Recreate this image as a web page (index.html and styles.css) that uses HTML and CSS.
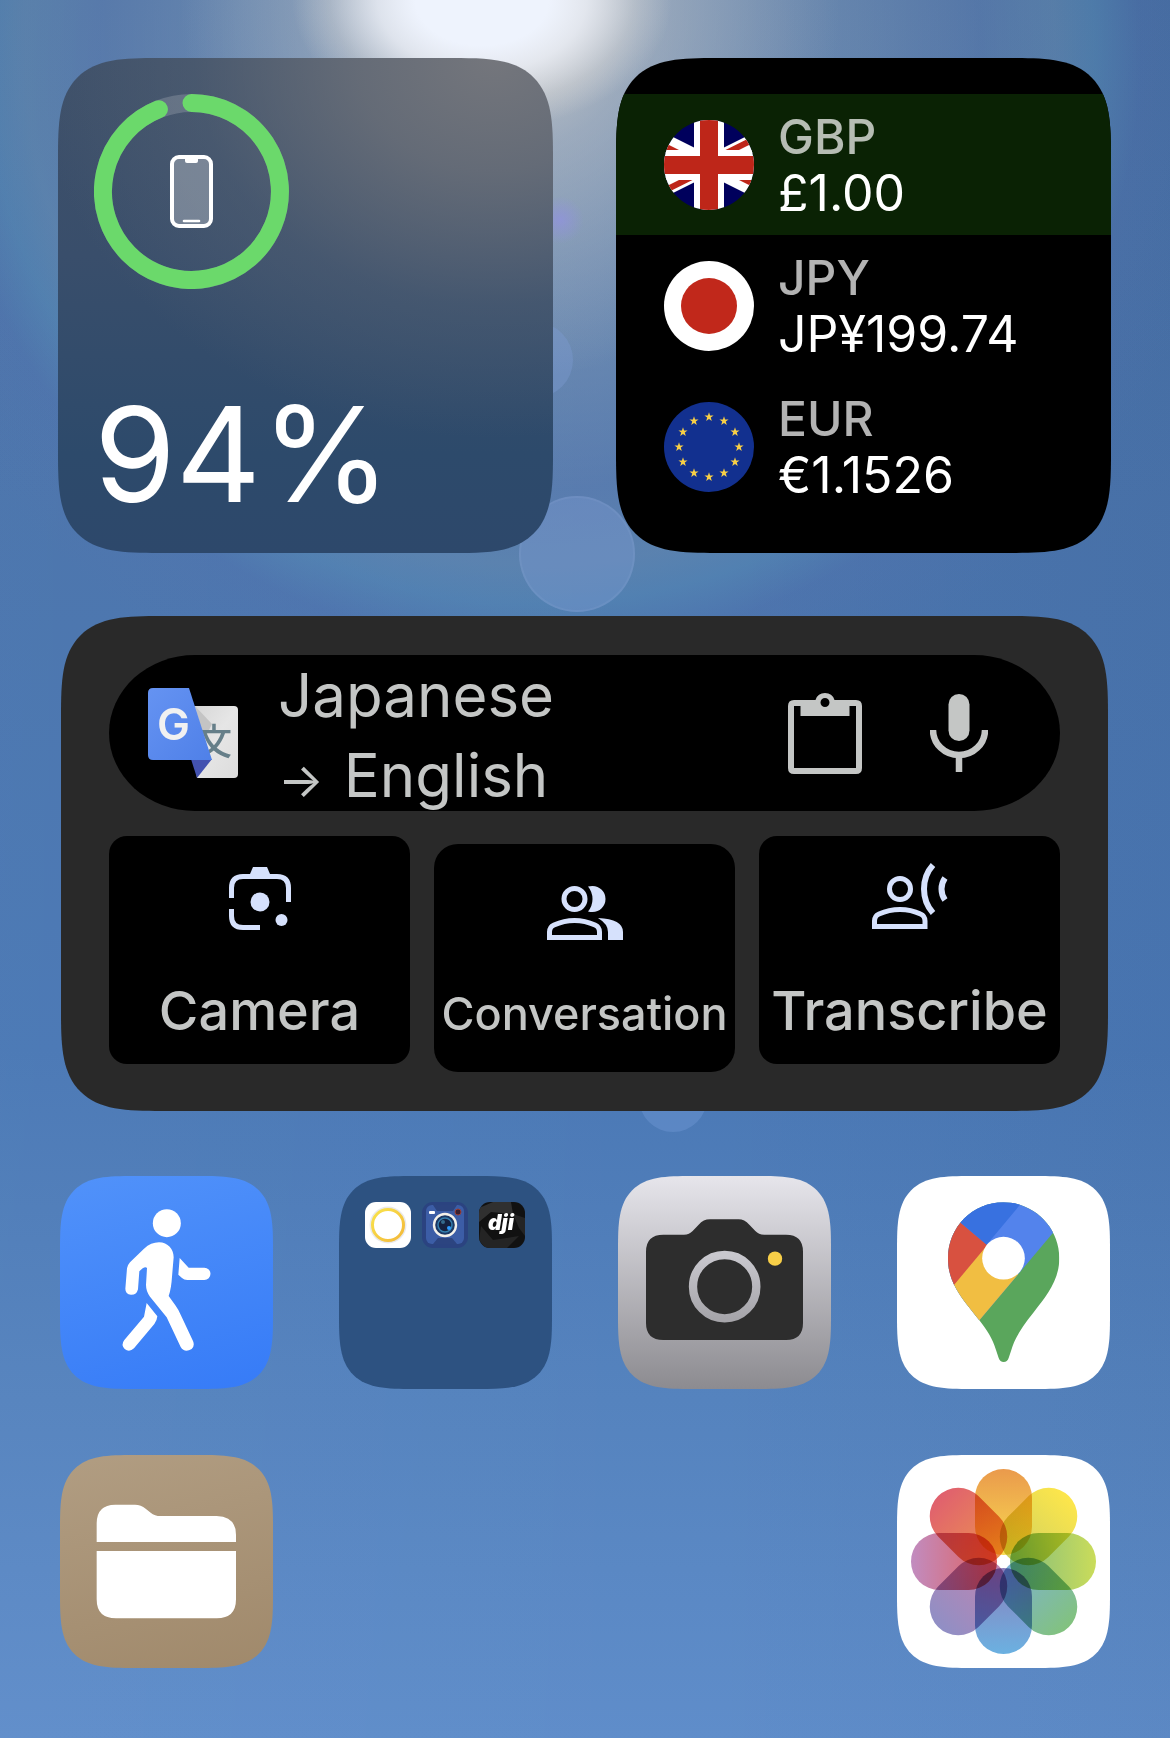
FILE: index.html
```html
<!DOCTYPE html>
<html lang="en">
<head>
<meta charset="utf-8">
<meta name="viewport" content="width=device-width, initial-scale=1">
<title>Home Screen</title>
<link rel="stylesheet" href="styles.css">
</head>
<body>
<div class="wallpaper" aria-hidden="true">
  <span class="flare flare-violet"></span>
  <span class="flare flare-small"></span>
  <span class="flare flare-large"></span>
  <span class="flare flare-low"></span>
</div>
<main class="home">
  <section class="widgets">
    <article class="widget battery" aria-label="Battery">
      <svg class="ring" viewBox="0 0 195 195" aria-hidden="true">
        <circle cx="97.5" cy="97.5" r="88.5" fill="none" stroke="#fff" stroke-opacity=".17" stroke-width="18"/>
        <path d="M97.5 9A88.5 88.5 0 1 1 64.9 15.2" fill="none" stroke="#6bd96b" stroke-width="18" stroke-linecap="round"/>
        <rect x="78" y="63" width="39" height="69" rx="7" fill="#fff" fill-opacity=".28" stroke="#fff" stroke-width="4"/>
        <path d="M91 64h13v3q0 2-2 2h-9q-2 0-2-2z" fill="#fff"/>
        <path d="M90 127h15" stroke="#fff" stroke-width="2.6" stroke-linecap="round"/>
      </svg>
      <p class="level">94%</p>
    </article>

    <article class="widget currency" aria-label="Exchange rates">
      <ul class="rates">
        <li class="rate rate-base">
          <svg class="flag" viewBox="15 0 30 30" aria-hidden="true">
            <defs><clipPath id="saltire"><path d="M30 15h30v15zv15H0zH0V0zV0h30z"/></clipPath></defs>
            <path fill="#00005c" d="M0 0h60v30H0z"/>
            <path stroke="#fff" stroke-width="6" d="M0 0l60 30M60 0L0 30"/>
            <path clip-path="url(#saltire)" stroke="#be2619" stroke-width="4" d="M0 0l60 30M60 0L0 30"/>
            <path stroke="#fff" stroke-width="10" d="M30 0v30M0 15h60"/>
            <path stroke="#be2619" stroke-width="6" d="M30 0v30M0 15h60"/>
          </svg>
          <p class="money"><span class="code">GBP</span><span class="amount">£1.00</span></p>
        </li>
        <li class="rate">
          <svg class="flag" viewBox="0 0 90 90" aria-hidden="true">
            <path fill="#fff" d="M0 0h90v90H0z"/><circle cx="45" cy="45" r="28" fill="#c1281b"/>
          </svg>
          <p class="money"><span class="code">JPY</span><span class="amount">JP¥199.74</span></p>
        </li>
        <li class="rate">
          <svg class="flag" viewBox="-45 -45 90 90" aria-hidden="true">
            <defs><path id="star" fill="#f8cf46" d="M0-4.8L1.1-1.5H4.6L1.8.6L2.8 3.9L0 1.9L-2.8 3.9L-1.8.6L-4.6-1.5H-1.1Z"/></defs>
            <path fill="#12308f" d="M-45-45h90v90h-90z"/>
            <use href="#star" x="0" y="-30"/><use href="#star" x="15" y="-26"/><use href="#star" x="26" y="-15"/>
            <use href="#star" x="30" y="0"/><use href="#star" x="26" y="15"/><use href="#star" x="15" y="26"/>
            <use href="#star" x="0" y="30"/><use href="#star" x="-15" y="26"/><use href="#star" x="-26" y="15"/>
            <use href="#star" x="-30" y="0"/><use href="#star" x="-26" y="-15"/><use href="#star" x="-15" y="-26"/>
          </svg>
          <p class="money"><span class="code">EUR</span><span class="amount">€1.1526</span></p>
        </li>
      </ul>
    </article>
  </section>

  <section class="widget translate" aria-label="Translate">
    <div class="search">
      <svg class="logo" viewBox="0 0 90 90" aria-hidden="true">
        <defs>
          <linearGradient id="lg-blue" x1="0" y1="0" x2="1" y2="1"><stop offset="0" stop-color="#6593f2"/><stop offset="1" stop-color="#4f80e8"/></linearGradient>
          <linearGradient id="lg-grey" x1="0" y1="0" x2="1" y2="1"><stop offset="0" stop-color="#d4d4d4"/><stop offset=".5" stop-color="#e6e6e6"/><stop offset="1" stop-color="#dcdcdc"/></linearGradient>
        </defs>
        <path fill="url(#lg-grey)" d="M40 18H86q4 0 4 4V86q0 4-4 4H49z"/>
        <path fill="#c4c4c4" d="M47 18L64 36L56 52z"/>
        <text class="logo-han" x="48" y="67">文</text>
        <path fill="#4352b0" d="M43 71H64L49 90z"/>
        <path fill="url(#lg-blue)" d="M5 0H41L64 72H5q-5 0-5-5V5q0-5 5-5z"/>
        <text class="logo-g" x="9" y="52">G</text>
      </svg>
      <p class="languages"><span>Japanese</span><span class="target"><span class="arrow">→</span>English</span></p>
      <button class="icon-button" type="button" aria-label="Paste">
        <svg width="74" height="82" viewBox="0 0 74 82" aria-hidden="true">
          <path fill="#c4c6c5" fill-rule="evenodd" d="M6 8H27.500A10 10 0 0 1 46.500 8H68q6 0 6 6V76q0 6-6 6H6q-6 0-6-6V14Q0 8 6 8zM6 14V76H68V14H61.500V24H12.500V14zM37 6a4.500 4.500 0 1 0 0 9a4.500 4.500 0 1 0 0-9z"/>
        </svg>
      </button>
      <button class="icon-button" type="button" aria-label="Speak">
        <svg width="58" height="78" viewBox="0 0 58 78" aria-hidden="true">
          <rect x="18.500" y="0" width="21" height="47" rx="10.500" fill="#c4c6c5"/>
          <path d="M3 36A26 25 0 0 0 55 36M29 61V78" fill="none" stroke="#c4c6c5" stroke-width="6.500"/>
        </svg>
      </button>
    </div>
    <div class="actions">
      <button class="action" type="button">
        <svg class="action-icon" viewBox="0 0 76 64" aria-hidden="true">
          <g fill="none" stroke="#d6e1fc" stroke-width="5"><path d="M9.500 32V22Q9.500 10.500 21 10.500H55Q66.500 10.500 66.500 22V36"/><path d="M9.500 43V50Q9.500 61.500 21 61.500H38"/></g>
          <path fill="#d6e1fc" d="M28 8L31 1H45L48 8z"/><circle cx="38" cy="36" r="9.500" fill="#d6e1fc"/><circle cx="59.500" cy="54" r="6" fill="#d6e1fc"/>
        </svg>
        <span>Camera</span>
      </button>
      <button class="action action-compact" type="button">
        <svg class="action-icon" viewBox="0 0 76 64" aria-hidden="true">
          <g fill="none" stroke="#d6e1fc" stroke-width="5"><circle cx="27.500" cy="22" r="10.500"/><path d="M2.500 60.500V55Q2.500 50 7 48Q17 43.500 27.500 43.500T48 48Q52.500 50 52.500 55V60.500z"/></g>
          <path fill="#d6e1fc" d="M41 9.500Q43 9 45.500 9A13 13 0 0 1 45.500 35Q43 35 41 34.500Q45.500 29 45.500 22T41 9.500z"/>
          <path fill="#d6e1fc" d="M51 41Q76 42 76 55V63H61V55Q61 47 51 41z"/>
        </svg>
        <span>Conversation</span>
      </button>
      <button class="action" type="button">
        <svg class="action-icon" viewBox="0 0 76 64" aria-hidden="true">
          <g fill="none" stroke="#d6e1fc" stroke-width="5"><circle cx="28" cy="23" r="10.500"/><path d="M2.500 60.500V55Q2.500 50 7 48Q17 43.500 28 43.500T48.500 48Q53 50 53 55V60.500z"/><path d="M61 -1Q52 9 52 23T61 47" stroke-width="6"/><path d="M73 12Q69.500 17 69.500 23T73 34" stroke-width="6"/></g>
        </svg>
        <span>Transcribe</span>
      </button>
    </div>
  </section>

  <nav class="apps" aria-label="Apps">
    <a class="app app-walk" href="#walk" aria-label="Walking">
      <svg viewBox="60 48 639 639" aria-hidden="true"><g fill="#fff">
        <circle cx="380.500" cy="189.500" r="42"/>
        <path d="M357 247C384 247 401 268 401 292L396 350Q394 385 386 408L406 436Q416 450 422 464L459 543Q465 558 455 567Q434 580 422 561L380 472L330 410Q318 394 318 375L321 324Q317 319 308 325L298 334L294 388Q290 405 273 404.500Q256 402 256 386L261 325Q262 316 270 307L312 266Q333 247 357 247Z"/>
        <path d="M419 294L446 323H493A18.500 18.500 0 0 1 493 360H442Q432 360 426 354L415 344Z"/>
        <path d="M320 429L352 469Q351 482 343 492L282 565Q268 578 254 567Q242 554 253 540L312 470Z"/>
      </g></svg>
    </a>
    <button class="app app-folder" type="button" aria-label="Folder">
      <svg class="mini" viewBox="0 0 46 46" aria-hidden="true">
        <defs><linearGradient id="sun" x1="0" y1="0" x2="1" y2="1"><stop offset="0" stop-color="#f9e44c"/><stop offset="1" stop-color="#f3b83a"/></linearGradient></defs>
        <path fill="#fff" d="M0 0h46v46H0z"/><circle cx="23" cy="23" r="18.500" fill="#e9e9ec"/><circle cx="23" cy="23" r="15.500" fill="#fff" stroke="url(#sun)" stroke-width="3"/>
      </svg>
      <svg class="mini" viewBox="0 0 46 46" aria-hidden="true">
        <path fill="#2b4380" d="M0 0h46v46H0z"/><rect x="4" y="3" width="38" height="39" rx="6" fill="#3c5da6"/>
        <path fill="#2c4480" d="M11 3H35L31 9H15zM11 42L16 36H30L35 42z"/>
        <rect x="7" y="9" width="6" height="3" rx="1" fill="#fff"/><circle cx="36" cy="10" r="3" fill="#3b2030" stroke="#9c4038"/>
        <circle cx="23" cy="23" r="11" fill="#1b3763" stroke="#f4f1ea" stroke-width="2.400"/><circle cx="23" cy="23" r="7" fill="#15213f" stroke="#357fae" stroke-width="1.500"/><circle cx="27" cy="26" r="2" fill="#2f9bff"/><circle cx="21" cy="20" r="2" fill="#356a8c"/>
      </svg>
      <svg class="mini" viewBox="0 0 46 46" aria-hidden="true">
        <path fill="#111" d="M0 0h46v46H0z"/><path fill="#303030" d="M0 6L14 0H32L34 12L12 10L0 20z"/><path fill="#242424" d="M34 12L46 16V34L40 26zM2 24L14 38L40 34L28 46H6L0 38z"/>
        <text class="dji" x="22" y="28" text-anchor="middle">dji</text>
      </svg>
    </button>
    <a class="app app-camera" href="#camera" aria-label="Camera">
      <svg viewBox="24 48 639 639" aria-hidden="true">
        <defs><linearGradient id="lens" x1="0" y1="0" x2="0" y2="1"><stop offset="0" stop-color="#c9c8ce"/><stop offset="1" stop-color="#a6a5aa"/></linearGradient></defs>
        <path fill="#2d2d2d" d="M160 224H222Q238 224 248 213L266 194Q280 178 300 178H386Q403 178 418 194L436 213Q446 224 462 224H528Q579 224 579 275V489Q579 540 528 540H160Q108 540 108 489V275Q108 224 160 224Z"/>
        <circle cx="344" cy="380" r="95" fill="none" stroke="url(#lens)" stroke-width="25"/><circle cx="495" cy="296" r="21.500" fill="#f8cf48"/>
      </svg>
    </a>
    <a class="app app-white" href="#maps" aria-label="Maps">
      <svg viewBox="51 48 639 639" aria-hidden="true">
        <defs><clipPath id="pin"><path d="M370 127C278 127 204 202 204 294C204 330 212 356 229 387C246 417 270 445 298 481C320 510 338 535 348 570L356 594Q360 606 371 606Q382 606 386 594L394 570C404 535 426 500 460 458C500 408 538 360 538 294C538 202 462 127 370 127Z"/></clipPath></defs>
        <g clip-path="url(#pin)">
          <path fill="#5aa65c" d="M200 120H540V610H200z"/>
          <path fill="#5383ec" d="M298 481L602 120H200V481z"/>
          <path fill="#f1be42" d="M150 458L322 252L415 342L240 550z"/>
          <path fill="#d85140" d="M322 255L150 461V112z"/>
          <path fill="#3871e0" d="M320 254L200 153V60H482z"/>
        </g>
        <circle cx="370.500" cy="294.500" r="64" fill="#fff"/>
      </svg>
    </a>
    <a class="app app-files" href="#files" aria-label="Files">
      <svg viewBox="60 45 639 639" aria-hidden="true">
        <path fill="#fff" d="M170 306V250Q170 194 226 194H285Q303 194 317 206L332 218Q344 228 362 228H530Q588 230 588 284V306ZM170 333H588V478Q588 535 530 535H228Q170 535 170 478Z"/>
      </svg>
    </a>
    <a class="app app-white app-last" href="#photos" aria-label="Photos">
      <svg viewBox="0 0 213 213" aria-hidden="true">
        <defs>
          <linearGradient id="p0" x1="0" y1="0" x2="0" y2="1"><stop offset="0" stop-color="#ea9a4c"/><stop offset="1" stop-color="#f9dc50"/></linearGradient>
          <linearGradient id="p1" x1="0" y1="0" x2="0" y2="1"><stop offset="0" stop-color="#fde64b"/><stop offset="1" stop-color="#cdd060"/></linearGradient>
          <linearGradient id="p2" x1="0" y1="0" x2="0" y2="1"><stop offset="0" stop-color="#cadc5a"/><stop offset="1" stop-color="#7fbb80"/></linearGradient>
          <linearGradient id="p3" x1="0" y1="0" x2="0" y2="1"><stop offset="0" stop-color="#82c27e"/><stop offset="1" stop-color="#7db2d4"/></linearGradient>
          <linearGradient id="p4" x1="0" y1="0" x2="0" y2="1"><stop offset="0" stop-color="#6bb1e1"/><stop offset="1" stop-color="#8c7fbc"/></linearGradient>
          <linearGradient id="p5" x1="0" y1="0" x2="0" y2="1"><stop offset="0" stop-color="#908fc5"/><stop offset="1" stop-color="#c184b0"/></linearGradient>
          <linearGradient id="p6" x1="0" y1="0" x2="0" y2="1"><stop offset="0" stop-color="#c18cc0"/><stop offset="1" stop-color="#e2605c"/></linearGradient>
          <linearGradient id="p7" x1="0" y1="0" x2="0" y2="1"><stop offset="0" stop-color="#e0606e"/><stop offset="1" stop-color="#ec9450"/></linearGradient>
        </defs>
        <g class="petals">
          <rect x="78" y="14" width="57" height="86" rx="28.500" fill="url(#p0)"/>
          <rect x="78" y="14" width="57" height="86" rx="28.500" fill="url(#p1)" transform="rotate(45 106.500 106.500)"/>
          <rect x="78" y="14" width="57" height="86" rx="28.500" fill="url(#p2)" transform="rotate(90 106.500 106.500)"/>
          <rect x="78" y="14" width="57" height="86" rx="28.500" fill="url(#p3)" transform="rotate(135 106.500 106.500)"/>
          <rect x="78" y="14" width="57" height="86" rx="28.500" fill="url(#p4)" transform="rotate(180 106.500 106.500)"/>
          <rect x="78" y="14" width="57" height="86" rx="28.500" fill="url(#p5)" transform="rotate(225 106.500 106.500)"/>
          <rect x="78" y="14" width="57" height="86" rx="28.500" fill="url(#p6)" transform="rotate(270 106.500 106.500)"/>
          <rect x="78" y="14" width="57" height="86" rx="28.500" fill="url(#p7)" transform="rotate(315 106.500 106.500)"/>
        </g>
        <circle cx="106.500" cy="106.500" r="6" fill="#fff"/>
      </svg>
    </a>
  </nav>
</main>
</body>
</html>
```
FILE: styles.css
```css
* { box-sizing: border-box; margin: 0; padding: 0; }

body {
  position: relative;
  min-height: 100vh;
  font-family: Inter, "Noto Sans CJK JP", sans-serif;
  color: #fff;
  background: #4a77b4;
}

button { border: 0; font: inherit; color: inherit; cursor: pointer; }
a { color: inherit; text-decoration: none; }
ul { list-style: none; }
svg { display: block; }

.wallpaper {
  position: absolute;
  inset: 0;
  overflow: hidden;
  background:
    radial-gradient(ellipse 190px 130px at 482px 0, #eef3fd 35%, rgba(238, 241, 248, .8) 55%, rgba(235, 232, 228, .3) 80%, rgba(225, 220, 215, 0) 100%),
    radial-gradient(ellipse 330px 380px at 510px 0, rgba(225, 218, 210, .85), rgba(205, 205, 205, .45) 40%, rgba(190, 195, 200, 0)),
    radial-gradient(circle at 540px 50px, rgba(160, 172, 185, .55) 0, rgba(140, 160, 185, .45) 300px, rgba(115, 138, 180, .35) 440px, rgba(115, 150, 178, .4) 515px, rgba(95, 150, 185, .35) 555px, rgba(90, 115, 175, .2) 600px, rgba(80, 110, 170, 0) 700px),
    linear-gradient(90deg, rgba(255, 255, 255, .02), rgba(0, 0, 0, 0) 60%, rgba(10, 20, 50, .04)),
    linear-gradient(#466fa4, #4a74ac 500px, #4a78b5 1050px, #5583be 1400px, #5f8dca 1738px);
}

.flare { position: absolute; border-radius: 50%; background: rgba(125, 155, 210, .4); }
.flare-violet { left: 536px; top: 196px; width: 48px; height: 48px; background: radial-gradient(rgba(145, 145, 225, .7), rgba(145, 145, 215, 0) 70%); }
.flare-small { left: 497px; top: 322px; width: 76px; height: 76px; }
.flare-large { left: 519px; top: 496px; width: 116px; height: 116px; border: 2px solid rgba(150, 175, 215, .15); }
.flare-low { left: 639px; top: 1064px; width: 68px; height: 68px; background: rgba(115, 155, 215, .4); }

.home { position: relative; padding: 58px 59px 70px 58px; }

.widgets { display: grid; grid-template-columns: 1fr 1fr; gap: 63px; }

.widget { overflow: hidden; border-radius: 72px; }

.battery {
  display: flex;
  flex-direction: column;
  justify-content: space-between;
  aspect-ratio: 1;
  padding: 36px 36px 19px;
  background:
    radial-gradient(ellipse 460px 380px at 88% 0, #74767c, rgba(110, 114, 122, .8) 30%, rgba(90, 102, 118, .4) 65%, rgba(70, 85, 110, 0)),
    linear-gradient(#3e5069, #394e6b 40%, #2d4a6b 80%, #2d486b);
}
.ring { width: 195px; height: 195px; }
.level { font-size: 132px; line-height: 160px; }

.currency { aspect-ratio: 1; padding-top: 36px; background: #000; }
.rate { display: flex; align-items: center; gap: 24px; height: 141px; padding-left: 48px; }
.rate-base { background: #0a2204; }
.flag { flex: none; width: 90px; height: 90px; border-radius: 50%; }
.money { display: flex; flex-direction: column; font-size: 48px; line-height: 57px; }
.code { font-weight: 500; color: rgba(255, 255, 255, .7); }
.amount { font-size: 50px; }

.translate { margin: 63px 3px 0; padding: 39px 48px; background: #292929; }
.search { display: flex; align-items: center; height: 156px; padding: 0 72px 0 39px; border-radius: 86px / 78px; background: #000; color: #c4c6c5; }
.logo { flex: none; width: 90px; height: 90px; }
.logo-g { font: 600 44px Inter, sans-serif; fill: #f1f1f1; }
.logo-han { font: 500 36px "Noto Sans CJK JP", sans-serif; fill: #667f89; }
.languages { display: flex; flex: 1; flex-direction: column; margin-left: 40px; padding-top: 8px; font-size: 60px; line-height: 80px; }
.arrow { margin-right: 20px; font-size: 48px; }
.icon-button { margin-left: 68px; background: none; }

.actions { display: grid; grid-template-columns: repeat(3, 1fr); align-items: start; gap: 24px; margin-top: 25px; }
.action { display: flex; flex-direction: column; align-items: center; justify-content: space-between; height: 228px; padding: 30px 0 17px; border-radius: 18px; background: #000; color: #c4c6c5; font-size: 54px; line-height: 72px; font-weight: 500; }
.action-compact { margin-top: 8px; padding: 33px 0 22px; border-radius: 24px; font-size: 45px; }
.action-icon { width: 76px; height: 64px; overflow: visible; }

.apps { display: grid; grid-template-columns: repeat(4, 1fr); gap: 66px; margin: 65px 1px 0 2px; }
.app { display: block; aspect-ratio: 1; overflow: hidden; border-radius: 52px; }
.app-walk { background: linear-gradient(165deg, #5192fa, #367bf7); }
.app-folder { display: flex; align-items: flex-start; gap: 11px; padding: 26px; background: #2d5281; }
.app-camera { background: linear-gradient(#e6e5eb, #8c8b90); }
.app-white { background: #fff; }
.app-files { background: linear-gradient(165deg, #b19d82, #a0896b); }
.app-last { grid-column: 4; }
.mini { flex: none; width: 46px; height: 46px; border-radius: 11px; }
.dji { font: italic 900 21px Inter, sans-serif; fill: #fff; }
.petals { isolation: isolate; }
.petals rect { mix-blend-mode: multiply; }

/* Continuous-curvature corners where the browser has them. */
@supports (corner-shape: squircle) {
  .widget { border-radius: 101px; corner-shape: superellipse(1.7); }
  .app { border-radius: 74px; corner-shape: superellipse(1.7); }
}
```
